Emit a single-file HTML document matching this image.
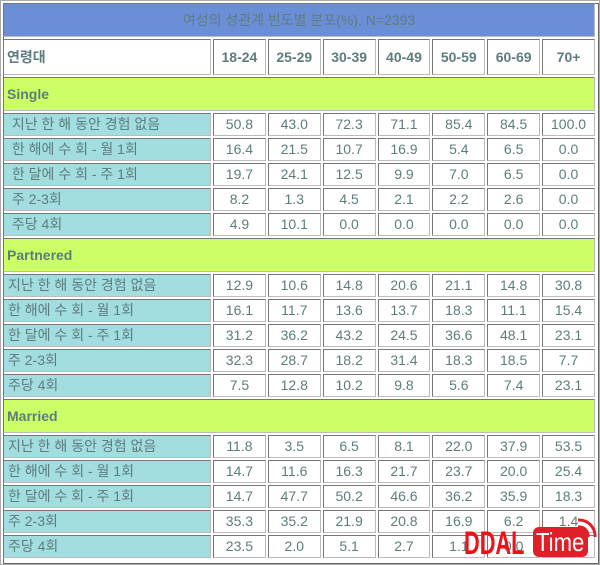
<!DOCTYPE html>
<html><head><meta charset="utf-8"><style>
html,body{margin:0;padding:0;background:#fff;width:600px;height:565px;overflow:hidden}
.wrap{position:absolute;left:0;top:0;width:598px;height:563px;border:1px solid #aaa}
.in{position:absolute;left:2px;top:2px;width:594px;height:559px;border:1px solid #666}
table{position:absolute;left:1px;top:1px;border-collapse:separate;border-spacing:2px;width:596px;table-layout:fixed;
font-family:"Liberation Sans","Noto Sans CJK KR",sans-serif;font-size:14px;color:#5d7d7d}
td{border:1px solid #777;border-right-color:#bbb;border-bottom-color:#bbb;padding:0 3px;text-align:center;height:21px;line-height:21px;white-space:nowrap;overflow:hidden;background:#fff}
td.l{text-align:left;background:#a2dde0;padding-left:4px}
tr.t td{background:#6b8fd6;height:32px;font-size:14px}
tr.h td{height:34px;font-weight:bold}
tr.h td.hl{text-align:left;background:#fff;font-size:14px}
tr.s td{background:#ccff66;height:32px;text-align:left;font-weight:bold}
.ddal{position:absolute;left:464px;top:527px;white-space:nowrap;font-family:"Liberation Sans",sans-serif;font-weight:bold;font-size:32px;line-height:32px;color:#f01018;transform:scaleX(0.68);transform-origin:0 0}
.time{position:absolute;left:533px;top:527px;width:55px;height:30px;background:#e02028;border-radius:6px}
.time b{position:absolute;left:3px;top:1px;font-family:"Liberation Sans",sans-serif;font-weight:normal;font-size:26px;line-height:28px;color:#fff;white-space:nowrap;transform:scaleX(0.85);transform-origin:0 0}
</style></head><body>
<div class="wrap"><div class="in"></div></div>
<table>
<colgroup><col style="width:208px"><col><col><col><col><col><col><col></colgroup>
<tr class="t"><td colspan="8">여성의 성관계 빈도별 분포(%), N=2393</td></tr>
<tr class="h"><td class="hl">연령대</td><td>18-24</td><td>25-29</td><td>30-39</td><td>40-49</td><td>50-59</td><td>60-69</td><td>70+</td></tr>
<tr class="s"><td colspan="8">Single</td></tr>
<tr><td class="l">&nbsp;지난 한 해 동안 경험 없음</td><td>50.8</td><td>43.0</td><td>72.3</td><td>71.1</td><td>85.4</td><td>84.5</td><td>100.0</td></tr>
<tr><td class="l">&nbsp;한 해에 수 회 - 월 1회</td><td>16.4</td><td>21.5</td><td>10.7</td><td>16.9</td><td>5.4</td><td>6.5</td><td>0.0</td></tr>
<tr><td class="l">&nbsp;한 달에 수 회 - 주 1회</td><td>19.7</td><td>24.1</td><td>12.5</td><td>9.9</td><td>7.0</td><td>6.5</td><td>0.0</td></tr>
<tr><td class="l">&nbsp;주 2-3회</td><td>8.2</td><td>1.3</td><td>4.5</td><td>2.1</td><td>2.2</td><td>2.6</td><td>0.0</td></tr>
<tr><td class="l">&nbsp;주당 4회</td><td>4.9</td><td>10.1</td><td>0.0</td><td>0.0</td><td>0.0</td><td>0.0</td><td>0.0</td></tr>
<tr class="s"><td colspan="8">Partnered</td></tr>
<tr><td class="l">지난 한 해 동안 경험 없음</td><td>12.9</td><td>10.6</td><td>14.8</td><td>20.6</td><td>21.1</td><td>14.8</td><td>30.8</td></tr>
<tr><td class="l">한 해에 수 회 - 월 1회</td><td>16.1</td><td>11.7</td><td>13.6</td><td>13.7</td><td>18.3</td><td>11.1</td><td>15.4</td></tr>
<tr><td class="l">한 달에 수 회 - 주 1회</td><td>31.2</td><td>36.2</td><td>43.2</td><td>24.5</td><td>36.6</td><td>48.1</td><td>23.1</td></tr>
<tr><td class="l">주 2-3회</td><td>32.3</td><td>28.7</td><td>18.2</td><td>31.4</td><td>18.3</td><td>18.5</td><td>7.7</td></tr>
<tr><td class="l">주당 4회</td><td>7.5</td><td>12.8</td><td>10.2</td><td>9.8</td><td>5.6</td><td>7.4</td><td>23.1</td></tr>
<tr class="s"><td colspan="8">Married</td></tr>
<tr><td class="l">지난 한 해 동안 경험 없음</td><td>11.8</td><td>3.5</td><td>6.5</td><td>8.1</td><td>22.0</td><td>37.9</td><td>53.5</td></tr>
<tr><td class="l">한 해에 수 회 - 월 1회</td><td>14.7</td><td>11.6</td><td>16.3</td><td>21.7</td><td>23.7</td><td>20.0</td><td>25.4</td></tr>
<tr><td class="l">한 달에 수 회 - 주 1회</td><td>14.7</td><td>47.7</td><td>50.2</td><td>46.6</td><td>36.2</td><td>35.9</td><td>18.3</td></tr>
<tr><td class="l">주 2-3회</td><td>35.3</td><td>35.2</td><td>21.9</td><td>20.8</td><td>16.9</td><td>6.2</td><td>1.4</td></tr>
<tr><td class="l">주당 4회</td><td>23.5</td><td>2.0</td><td>5.1</td><td>2.7</td><td>1.1</td><td>0.0</td><td>0.0</td></tr>
</table>
<div class="ddal">DDAL</div>
<div class="time"><b>Time</b></div>
<svg style="position:absolute;left:576px;top:518px" width="22" height="22" viewBox="0 0 22 22"><path d="M2 9 A9 9 0 0 1 12 19" stroke="#e02028" stroke-width="3" fill="none"/><path d="M2 2 A16 16 0 0 1 19 19" stroke="#e02028" stroke-width="3" fill="none"/></svg>
</body></html>
